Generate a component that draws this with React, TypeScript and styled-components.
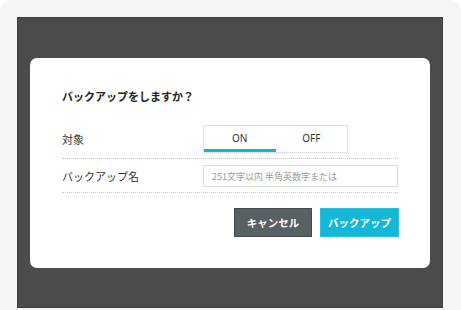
import React from "react"
import styled, { createGlobalStyle } from "styled-components"

const GlobalStyle = createGlobalStyle`
  html, body {
    margin: 0;
    padding: 0;
    background: #ffffff;
  }
  body {
    font-family: "Noto Sans CJK JP", "Noto Sans", sans-serif;
    color: #333;
  }
`

const Frame = styled.div`
  width: 461px;
  height: 310px;
  box-sizing: border-box;
  padding: 17px 18px 0 17px;
  background: #f5f5f5;
  border-radius: 10px 10px 0 0;
  overflow: hidden;
`

const Overlay = styled.div`
  height: 291px;
  box-sizing: border-box;
  background: #4b4b4b;
  border: 1px solid #3e3e3e;
  padding: 40px 12px 0 12px;
`

const Modal = styled.div`
  width: 400px;
  height: 210px;
  box-sizing: border-box;
  background: #fff;
  border-radius: 7px;
  padding: 30px 32px 0 32px;
`

const Title = styled.h2`
  margin: 0 0 18px;
  font-size: 11px;
  line-height: 16px;
  font-weight: 700;
  color: #222;
`

const Row = styled.div<{ $pad: string }>`
  display: grid;
  grid-template-columns: 141px 1fr;
  align-items: center;
  box-sizing: border-box;
  border-bottom: 1px dotted #c8c8c8;
  padding: ${({ $pad }) => $pad};
`

const Label = styled.span`
  font-size: 11px;
  color: #333;
`

const Toggle = styled.div`
  display: flex;
  width: 145px;
  height: 28px;
  box-sizing: border-box;
  border: 1px solid #e0e0e0;
`

const ToggleOption = styled.button<{ $active?: boolean }>`
  flex: 1;
  border: none;
  background: #fff;
  font-family: "Noto Sans", sans-serif;
  font-size: 10px;
  color: #333;
  padding: 0;
  border-bottom: 3px solid ${({ $active }) => ($active ? "#13b3d4" : "transparent")};
  padding-top: 1px;
`

const TextInput = styled.input`
  display: block;
  width: 100%;
  height: 22px;
  box-sizing: border-box;
  border: 1px solid #dcdcdc;
  padding: 0 8px;
  font-family: "Noto Sans CJK JP", sans-serif;
  font-size: 9px;
  outline: none;

  &::placeholder {
    color: #9a9a9a;
  }
`

const Actions = styled.div`
  display: flex;
  justify-content: flex-end;
  gap: 8px;
  margin-top: 15px;
  margin-right: -1px;
`

const Button = styled.button<{ $primary?: boolean }>`
  height: 29px;
  padding: 0;
  width: ${({ $primary }) => ($primary ? 79 : 78)}px;
  border: 1px solid ${({ $primary }) => ($primary ? "#2cc0de" : "#444a4c")};
  background: ${({ $primary }) => ($primary ? "#13b8d9" : "#596063")};
  color: #fff;
  font-family: "Noto Sans CJK JP", sans-serif;
  font-size: 10.5px;
  font-weight: 700;
`

const App: React.FC = () => {
  return (
    <>
      <GlobalStyle />
      <Frame>
        <Overlay>
          <Modal>
            <Title>バックアップをしますか？</Title>
            <Row $pad="3px 0 5px">
              <Label>対象</Label>
              <Toggle>
                <ToggleOption $active>ON</ToggleOption>
                <ToggleOption>OFF</ToggleOption>
              </Toggle>
            </Row>
            <Row $pad="6px 0 5px">
              <Label>バックアップ名</Label>
              <TextInput placeholder="251文字以内 半角英数字または" />
            </Row>
            <Actions>
              <Button>キャンセル</Button>
              <Button $primary>バックアップ</Button>
            </Actions>
          </Modal>
        </Overlay>
      </Frame>
    </>
  )
}

export default App
